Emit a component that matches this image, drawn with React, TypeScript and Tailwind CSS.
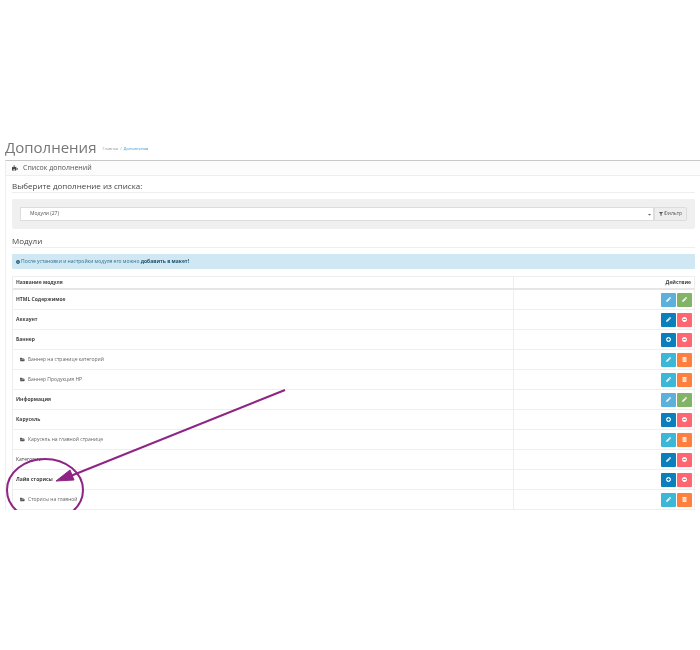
import React from 'react'
import {
  FaPuzzlePiece,
  FaFolderOpen,
  FaPencilAlt,
  FaPlusCircle,
  FaMinusCircle,
  FaTrashAlt,
  FaFilter,
  FaInfoCircle,
  FaCaretDown,
} from 'react-icons/fa'

type Kind = 'edit' | 'installed' | 'add' | 'child'

interface Row {
  name: string
  bold?: boolean
  child?: boolean
  kind: Kind
}

const rows: Row[] = [
  { name: 'HTML Содержимое', bold: true, kind: 'edit' },
  { name: 'Аккаунт', bold: true, kind: 'installed' },
  { name: 'Баннер', bold: true, kind: 'add' },
  { name: 'Баннер на странице категорий', child: true, kind: 'child' },
  { name: 'Баннер Продукция HP', child: true, kind: 'child' },
  { name: 'Информация', bold: true, kind: 'edit' },
  { name: 'Карусель', bold: true, kind: 'add' },
  { name: 'Карусель на главной странице', child: true, kind: 'child' },
  { name: 'Категории', kind: 'installed' },
  { name: 'Лайв сторисы', bold: true, kind: 'add' },
  { name: 'Сторисы на главной', child: true, kind: 'child' },
]

const Btn = ({ className, children }: { className: string; children: React.ReactNode }) => (
  <span className={`flex h-[14px] w-[15px] items-center justify-center rounded-[1px] text-[5px] text-white ${className}`}>
    {children}
  </span>
)

const Actions = ({ kind }: { kind: Kind }) => {
  if (kind === 'edit') {
    return (
      <>
        <Btn className="bg-[#5bb0dc]"><FaPencilAlt /></Btn>
        <Btn className="bg-[#82b366]"><FaPencilAlt /></Btn>
      </>
    )
  }
  if (kind === 'installed') {
    return (
      <>
        <Btn className="bg-[#0a7fbc]"><FaPencilAlt /></Btn>
        <Btn className="bg-[#ff6670]"><FaMinusCircle /></Btn>
      </>
    )
  }
  if (kind === 'add') {
    return (
      <>
        <Btn className="bg-[#0a7fbc]"><FaPlusCircle /></Btn>
        <Btn className="bg-[#ff6670]"><FaMinusCircle /></Btn>
      </>
    )
  }
  return (
    <>
      <Btn className="bg-[#3cb7d7]"><FaPencilAlt /></Btn>
      <Btn className="bg-[#ff7f3f]"><FaTrashAlt /></Btn>
    </>
  )
}

export default function App() {
  return (
    <div className="h-[650px] w-[700px] bg-white font-['Open_Sans',sans-serif] text-[#555]">
      <div className="relative h-[510px] overflow-hidden pt-[134px]">
        <div className="blur-[0.3px]">
          <div className="flex h-[26px] items-center pl-[5px]">
            <h1 className="text-[15px] leading-none text-[#777]">Дополнения</h1>
            <span className="ml-[6px] mt-[3px] text-[4px] text-[#999]">Главная</span>
            <span className="mx-[2px] mt-[3px] text-[4px] text-[#999]">/</span>
            <span className="mt-[3px] text-[4px] text-[#1e91cf]">Дополнения</span>
          </div>

          <div className="ml-[5px] border-t border-l border-t-[#c8c8c8] border-l-[#eee]">
            <div className="flex h-[15px] items-center gap-[5px] border-b border-[#eee] bg-[#fcfcfc] pl-[6px] text-[7px]">
              <FaPuzzlePiece className="text-[6px] text-[#444]" />
              <span>Список дополнений</span>
            </div>

            <div className="mr-[5px] pl-[6px]">
              <div className="flex h-[17px] items-end border-b border-[#eee] pb-[1px] text-[8px] leading-[10px] text-[#444]">
                Выберите дополнение из списка:
              </div>

              <div className="mt-[6px] flex h-[30px] items-center rounded-[2px] bg-[#f0f0f0] pl-[8px] pr-[8px]">
                <div className="flex h-[14px] flex-1 items-center justify-between border border-[#ddd] bg-white pl-[9px] pr-[1px] text-[5px]">
                  <span>Модули (27)</span>
                  <FaCaretDown className="text-[5px] text-[#666]" />
                </div>
                <div className="flex h-[14px] w-[33px] items-center justify-center gap-[1px] rounded-r-[2px] border border-[#ddd] bg-[#eee] text-[5px] text-[#555]">
                  <FaFilter className="text-[4px]" />
                  <span>Фильтр</span>
                </div>
              </div>

              <div className="flex h-[19px] items-end border-b border-[#eee] pb-[1px] text-[8px] leading-[11px] text-[#444]">
                Модули
              </div>

              <div className="mt-[6px] flex h-[15px] items-center gap-[1px] rounded-[1px] bg-[#cfe8f3] pl-[4px] text-[5px] text-[#31708f]">
                <FaInfoCircle className="text-[4px] text-[#1d5f80]" />
                <span>
                  После установки и настройки модуля его можно <b className="text-[#1b4f6a]">добавить в макет!</b>
                </span>
              </div>

              <div className="mt-[7px] border-x border-t border-[#eee] text-[5px]">
                <div className="flex h-[13px] items-center border-b-2 border-[#e6e6e6] font-bold text-[#444]">
                  <div className="flex h-full w-[501px] items-center border-r border-[#eee] pl-[3px]">Название модуля</div>
                  <div className="flex-1 pr-[3px] text-right">Действие</div>
                </div>
                {rows.map((row) => (
                  <div key={row.name} className="flex h-[20px] items-center border-b border-[#eee]">
                    <div
                      className={`flex h-full w-[501px] items-center border-r border-[#eee] ${
                        row.child ? 'pl-[7px] text-[#666]' : 'pl-[3px] text-[#444]'
                      } ${row.bold ? 'font-bold' : ''}`}
                    >
                      {row.child && <FaFolderOpen className="mr-[3px] text-[5px] text-[#555]" />}
                      {row.name}
                    </div>
                    <div className="flex flex-1 justify-end gap-[1px] pr-[2px]">
                      <Actions kind={row.kind} />
                    </div>
                  </div>
                ))}
              </div>
            </div>
          </div>
        </div>

        {/* annotation over the table */}
        <svg className="absolute left-0 top-0" width="700" height="510" viewBox="0 0 700 510" fill="none">
          <ellipse cx="45" cy="490" rx="38" ry="31" stroke="#8e2585" strokeWidth="2" />
          <line x1="285" y1="390" x2="68" y2="477" stroke="#8e2585" strokeWidth="2" />
          <polygon points="56,481 70,470 74,480" fill="#8e2585" stroke="#8e2585" strokeWidth="1" />
        </svg>
      </div>
    </div>
  )
}
